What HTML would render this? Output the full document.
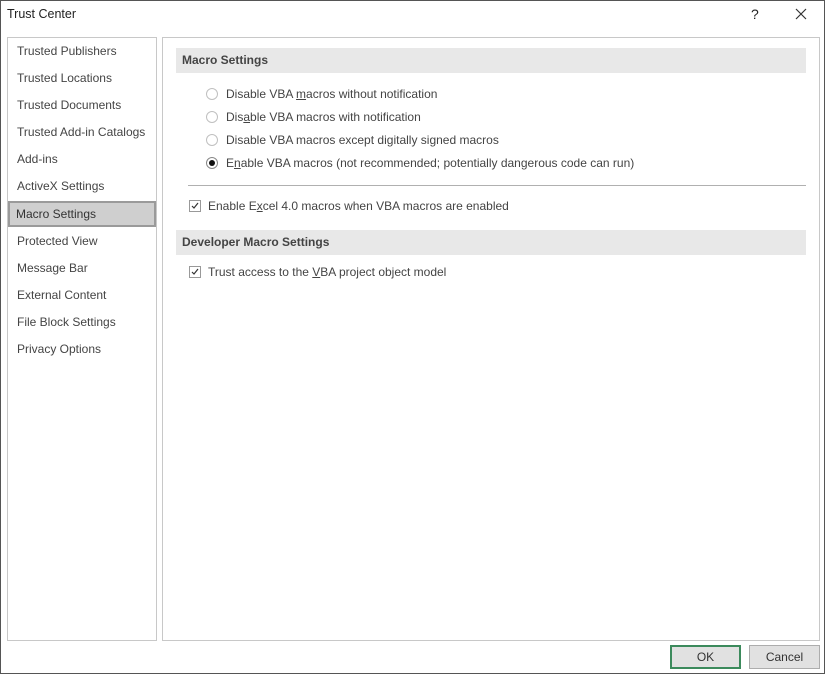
<!DOCTYPE html>
<html><head><style>
*{margin:0;padding:0;box-sizing:border-box}
body{width:825px;height:674px;background:#fff;font-family:"Liberation Sans",sans-serif;font-size:12px;color:#444;position:relative;overflow:hidden}
#frame{position:absolute;left:0;top:0;width:825px;height:674px;border:1px solid #555;pointer-events:none}
.a{position:absolute;white-space:nowrap}
#left{position:absolute;left:7px;top:37px;width:150px;height:604px;border:1px solid #c8c8c8}
#right{position:absolute;left:162px;top:37px;width:658px;height:604px;border:1px solid #c8c8c8}
.nav{position:absolute;left:9px}
.sel{position:absolute;left:0px;top:163px;width:148px;height:26px;background:#cfcfcf;border:2px solid #9a9a9a}
.hd{position:absolute;left:13px;width:630px;height:25px;background:#e8e8e8;font-weight:bold;color:#444;padding:5px 6px}
.rad{position:absolute;width:12px;height:12px;border:1px solid #c0c0c0;border-radius:50%;background:#fff}
.cb{position:absolute;width:12px;height:12px;border:1px solid #999;background:#fff}
.btn{position:absolute;top:645px;width:71px;height:24px;background:#e1e1e1;border:1px solid #adadad;text-align:center;line-height:22px;color:#333}
u{text-decoration:underline}
</style></head><body>
<div id="frame"></div>
<div class="a" style="left:7px;top:7px;color:#222;font-size:12.5px">Trust Center</div>
<div class="a" style="left:751px;top:6px;color:#222;font-size:14px">?</div>
<svg class="a" style="left:795px;top:8px" width="12" height="12"><path d="M1 1L11 11M11 1L1 11" stroke="#333" stroke-width="1.2"/></svg>
<div id="left">
<div class="sel"></div>
<div class="nav" style="top:6px">Trusted Publishers</div>
<div class="nav" style="top:33px">Trusted Locations</div>
<div class="nav" style="top:60px">Trusted Documents</div>
<div class="nav" style="top:87px">Trusted Add-in Catalogs</div>
<div class="nav" style="top:114px">Add-ins</div>
<div class="nav" style="top:141px">ActiveX Settings</div>
<div class="nav" style="top:169px;left:8px;color:#333">Macro Settings</div>
<div class="nav" style="top:196px">Protected View</div>
<div class="nav" style="top:223px">Message Bar</div>
<div class="nav" style="top:250px">External Content</div>
<div class="nav" style="top:277px">File Block Settings</div>
<div class="nav" style="top:304px">Privacy Options</div>
</div>
<div id="right">
<div class="hd" style="top:10px">Macro Settings</div>
<div class="rad" style="left:43px;top:50px"></div><div class="a" style="left:63px;top:49px">Disable VBA <u>m</u>acros without notification</div>
<div class="rad" style="left:43px;top:73px"></div><div class="a" style="left:63px;top:72px">Dis<u>a</u>ble VBA macros with notification</div>
<div class="rad" style="left:43px;top:96px"></div><div class="a" style="left:63px;top:95px">Disable VBA macros except di<u>g</u>itally signed macros</div>
<div class="rad" style="left:43px;top:119px;border-color:#888"><div style="position:absolute;left:2px;top:2px;width:6px;height:6px;border-radius:50%;background:#111"></div></div><div class="a" style="left:63px;top:118px">E<u>n</u>able VBA macros (not recommended; potentially dangerous code can run)</div>
<div class="a" style="left:25px;top:147px;width:618px;height:1px;background:#b0b0b0"></div>
<div class="cb" style="left:26px;top:162px"><svg width="10" height="10" style="position:absolute;left:0;top:0"><path d="M2 5L4 7L8 2" stroke="#333" stroke-width="1.2" fill="none"/></svg></div><div class="a" style="left:45px;top:161px">Enable E<u>x</u>cel 4.0 macros when VBA macros are enabled</div>
<div class="hd" style="top:192px">Developer Macro Settings</div>
<div class="cb" style="left:26px;top:228px"><svg width="10" height="10" style="position:absolute;left:0;top:0"><path d="M2 5L4 7L8 2" stroke="#333" stroke-width="1.2" fill="none"/></svg></div><div class="a" style="left:45px;top:227px">Trust access to the <u>V</u>BA project object model</div>
</div>
<div class="btn" style="left:670px;border:2px solid #3c8a5c;line-height:20px">OK</div>
<div class="btn" style="left:749px">Cancel</div>
</body></html>
